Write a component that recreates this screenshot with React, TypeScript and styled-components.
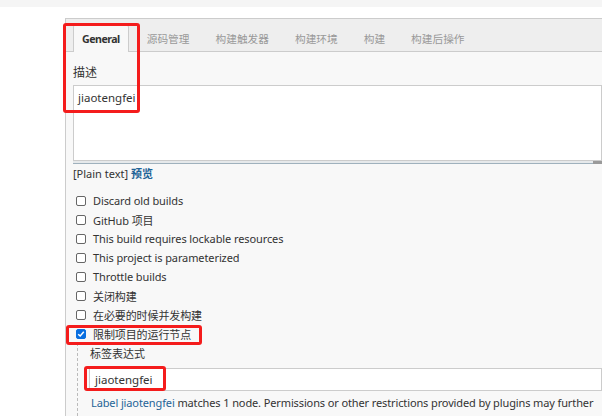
import React from 'react';
import styled, { createGlobalStyle } from 'styled-components';

const Global = createGlobalStyle`
  html, body { margin: 0; padding: 0; background: #fff; }
  body {
    font-family: "Noto Sans", "Noto Sans CJK SC", sans-serif;
    color: #333;
    font-size: 11px;
  }
`;

const Page = styled.div`
  position: relative;
  width: 602px;
  height: 416px;
  overflow: hidden;
  background: #fff;
`;

const TopStrip = styled.div`
  height: 7px;
  background: #f5f5f5;
`;

const Panel = styled.section`
  margin: 11px 0 0 65px;
  border-left: 1px solid #ccc;
  border-top: 1px solid #ccc;
  background: #f8f8f8;
  height: 420px;
`;

const TabBar = styled.div`
  display: flex;
  align-items: flex-end;
  height: 32px;
  padding-left: 7px;
  background: #eee;
  border-bottom: 1px solid #ccc;
`;

const Tab = styled.div<{ $active?: boolean }>`
  height: 27px;
  line-height: 26px;
  margin-bottom: -1px;
  box-sizing: border-box;
  white-space: nowrap;
  padding: ${p => (p.$active ? '0 8px' : '0 12px')};
  margin-right: ${p => (p.$active ? '5px' : '0')};
  font-size: ${p => (p.$active ? '10.6px' : '10.7px')};
  letter-spacing: ${p => (p.$active ? '-0.5px' : '0')};
  font-weight: ${p => (p.$active ? 700 : 400)};
  color: ${p => (p.$active ? '#333' : '#999')};
  background: ${p => (p.$active ? '#f8f8f8' : 'transparent')};
  border: ${p => (p.$active ? '1px solid #ccc' : '1px solid transparent')};
  border-bottom: none;
  border-radius: 2px 2px 0 0;
`;

const Content = styled.div`
  padding: 13px 0 0 7px;
`;

const FieldLabel = styled.div`
  font-size: 12px;
  line-height: 16px;
  margin-bottom: 4px;
`;

const TextArea = styled.div`
  box-sizing: border-box;
  height: 76px;
  background: #fff;
  border: 1px solid #ccc;
  padding: 3px 4px;
  font-size: 11.5px;
  line-height: 17px;
`;

const Handle = styled.div`
  display: flex;
  height: 2px;
  background: #e6e9eb;
  border-bottom: 1px solid #9fb1bd;
`;

const Grip = styled.span`
  margin-left: auto;
  width: 9px;
  height: 3px;
  background: #9a9a9a;
`;

const Hint = styled.div`
  margin-top: 3px;
  line-height: 14px;
  font-size: 11px;
`;

const Link = styled.a<{ $bold?: boolean }>`
  color: #1f6497;
  font-weight: ${p => (p.$bold ? 700 : 400)};
  text-decoration: none;
`;

const OptionList = styled.div`
  margin-top: 10px;
  display: flex;
  flex-direction: column;
`;

const Option = styled.label`
  display: flex;
  align-items: center;
  height: 19px;
  gap: 7px;
  padding-left: 3px;
  font-size: 11px;
  letter-spacing: -0.1px;
  white-space: nowrap;
`;

const Box = styled.span<{ $checked?: boolean }>`
  display: inline-flex;
  align-items: center;
  justify-content: center;
  box-sizing: border-box;
  width: 10px;
  height: 10px;
  border-radius: 2px;
  border: 1px solid ${p => (p.$checked ? '#0a6fe0' : '#666')};
  background: ${p => (p.$checked ? '#0a6fe0' : '#fff')};
`;

const Nested = styled.div`
  margin-left: 4px;
  border-left: 1px dashed #bbb;
  padding: 3px 0 0 12px;
  height: 80px;
`;

const NestedLabel = styled.div`
  font-size: 11px;
  line-height: 16px;
  margin-bottom: 6px;
`;

const Input = styled.div`
  box-sizing: border-box;
  height: 23px;
  margin-left: -1px;
  background: #fff;
  border: 1px solid #ccc;
  padding: 0 5px;
  line-height: 21px;
  font-size: 11.5px;
`;

const Note = styled.div`
  margin-top: 5px;
  margin-left: 1px;
  line-height: 14px;
  font-size: 11px;
  letter-spacing: -0.12px;
  white-space: nowrap;
`;

const Mark = styled.div<{ $x: number; $y: number; $w: number; $h: number }>`
  position: absolute;
  left: ${p => p.$x}px;
  top: ${p => p.$y}px;
  width: ${p => p.$w}px;
  height: ${p => p.$h}px;
  box-sizing: border-box;
  border: 3px solid #f41c1c;
  border-radius: 3px;
  pointer-events: none;
`;

const Checkbox = ({ checked }: { checked?: boolean }) => (
  <Box $checked={checked}>
    {checked && (
      <svg width="8" height="8" viewBox="0 0 8 8">
        <path d="M1.2 4.2 L3.2 6 L6.8 1.8" fill="none" stroke="#fff" strokeWidth="1.5" />
      </svg>
    )}
  </Box>
);

const options = [
  'Discard old builds',
  'GitHub 项目',
  'This build requires lockable resources',
  'This project is parameterized',
  'Throttle builds',
  '关闭构建',
  '在必要的时候并发构建',
];

const tabs = ['源码管理', '构建触发器', '构建环境', '构建', '构建后操作'];

export default function App() {
  return (
    <Page>
      <Global />
      <TopStrip />
      <Panel>
        <TabBar>
          <Tab $active>General</Tab>
          {tabs.map(t => (
            <Tab key={t}>{t}</Tab>
          ))}
        </TabBar>
        <Content>
          <FieldLabel>描述</FieldLabel>
          <TextArea>jiaotengfei</TextArea>
          <Handle>
            <Grip />
          </Handle>
          <Hint>
            [Plain text] <Link $bold>预览</Link>
          </Hint>
          <OptionList>
            {options.map(o => (
              <Option key={o}>
                <Checkbox />
                {o}
              </Option>
            ))}
            <Option>
              <Checkbox checked />
              限制项目的运行节点
            </Option>
          </OptionList>
          <Nested>
            <NestedLabel>标签表达式</NestedLabel>
            <Input>jiaotengfei</Input>
            <Note>
              <Link>Label jiaotengfei</Link> matches 1 node. Permissions or other restrictions provided by plugins may further
            </Note>
          </Nested>
        </Content>
      </Panel>
      <Mark $x={63} $y={23} $w={77} $h={90} />
      <Mark $x={66} $y={325} $w={136} $h={20} />
      <Mark $x={84} $y={366} $w={82} $h={25} />
    </Page>
  );
}
